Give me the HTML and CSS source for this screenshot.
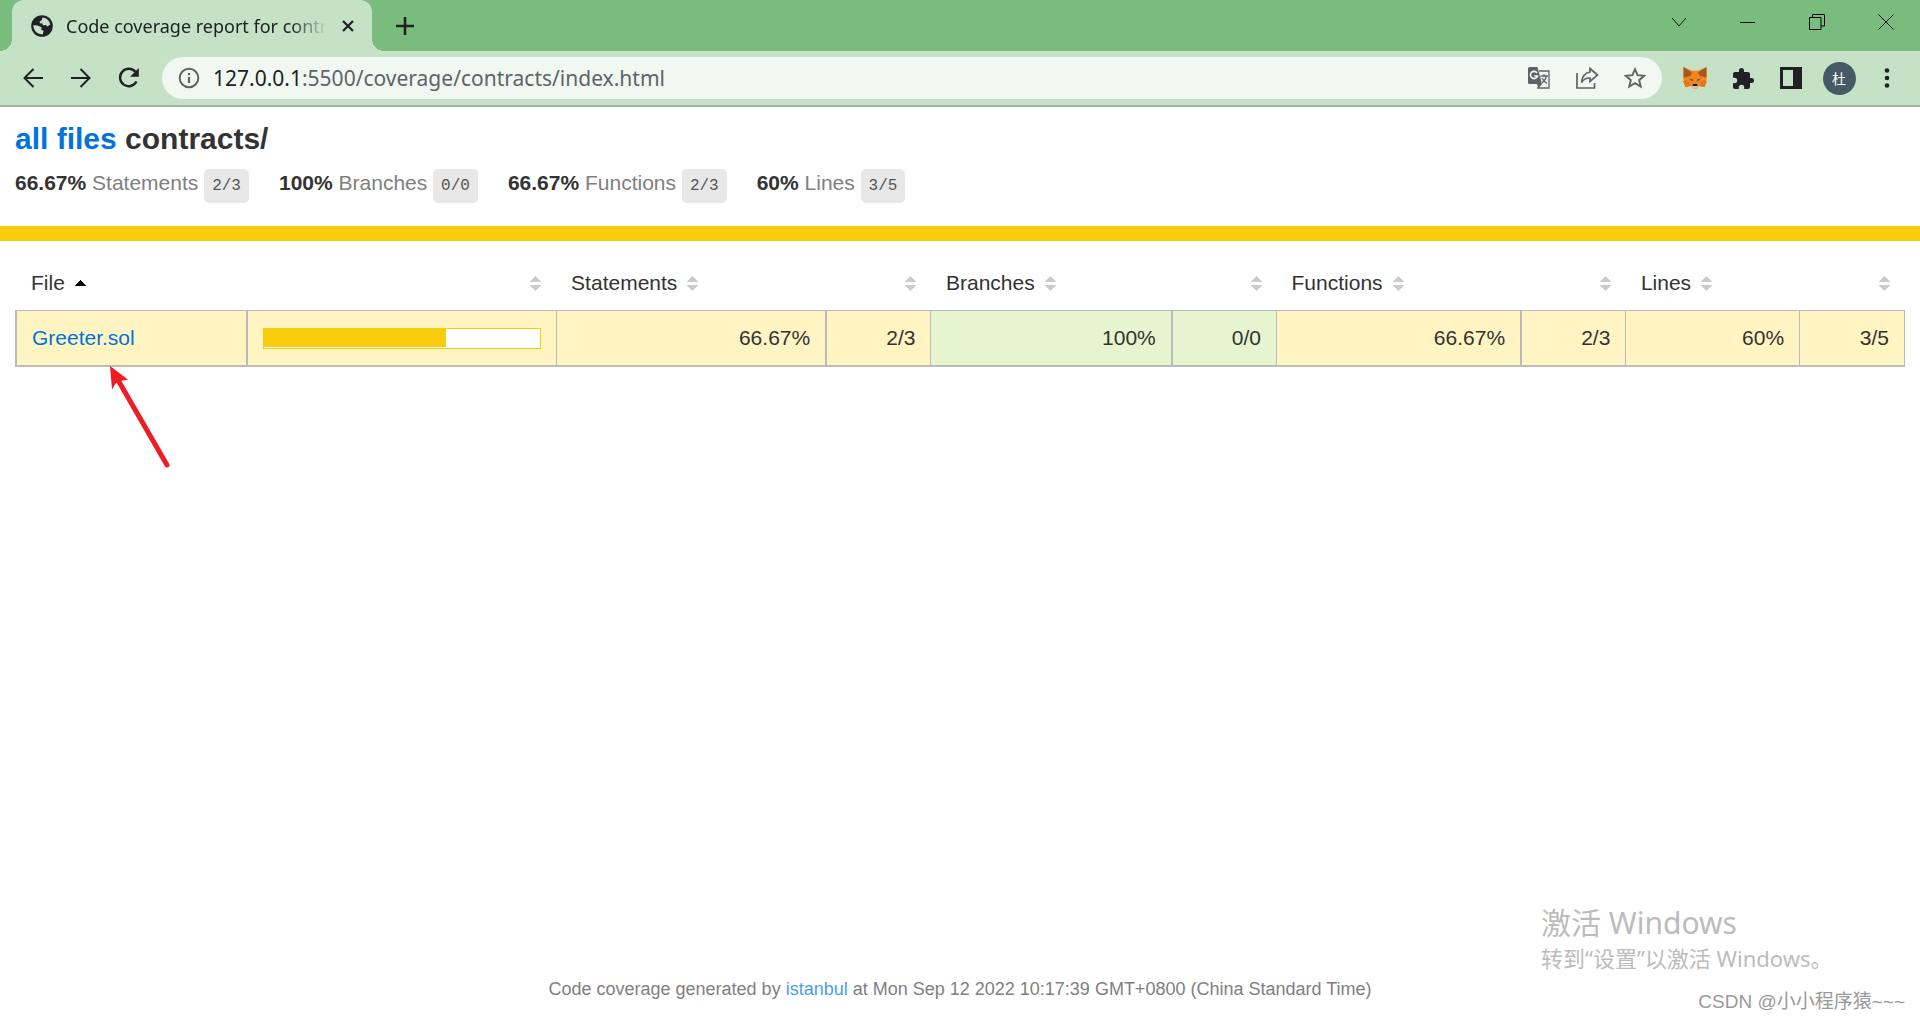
FILE: index.html
```html
<!DOCTYPE html>
<html lang="en">
<head>
<meta charset="utf-8">
<title>Code coverage report for contracts/</title>
<link rel="stylesheet" href="styles.css">
</head>
<body>
<div class="window">
  <header class="chrome">
    <div class="tabstrip">
      <div class="tab">
        <svg class="favicon" viewBox="0 0 22 22" width="22" height="22"><circle cx="11" cy="11" r="10.8" fill="#202124"/><path d="M11.5 2.6c3.600 0 7 3 7.700 6.800l-2.700 2.200-1.700-1.500-3 .2-.4-1.800-2.500-.2-.3-2 2-.8z M2.300 10.300l4.200.2 4 1.700-.3 2.500 2.300 1-.6 3.500c-5 .8-9.600-3.300-9.600-8.900z" fill="#c5e2c6"/></svg>
        <span class="tab-title">Code coverage report for contracts/</span>
        <button class="tab-close" aria-label="Close tab"><svg viewBox="0 0 12 12" width="12" height="12"><path d="M1 1l10 10M11 1L1 11" stroke="#202124" stroke-width="2.200"/></svg></button>
      </div>
      <button class="new-tab" aria-label="New tab"><svg viewBox="0 0 18 18" width="18" height="18"><path d="M9 0v18M0 9h18" stroke="#202124" stroke-width="2.600"/></svg></button>
      <div class="controls">
        <button aria-label="Search tabs"><svg viewBox="0 0 16 16" width="16" height="16"><path d="M1 4l7 8 7-8" fill="none" stroke="#111"/></svg></button>
        <button aria-label="Minimize"><svg viewBox="0 0 16 16" width="16" height="16"><path d="M0 8.500h15" stroke="#000"/></svg></button>
        <button aria-label="Restore"><svg viewBox="0 0 16 16" width="16" height="16"><path d="M.5 3.500h11.500v12H.5zM3.500 3.500v-3h12v11.500H12" fill="none" stroke="#000"/></svg></button>
        <button aria-label="Close"><svg viewBox="0 0 16 16" width="16" height="16"><path d="M.5 .5l15 15M15.500 .5l-15 15" stroke="#000"/></svg></button>
      </div>
    </div>
    <div class="toolbar">
      <div class="tools">
        <button aria-label="Back"><svg viewBox="0 0 20 20" width="20" height="20"><path d="M20 10H2M10.500 1L1.500 10l9 9" fill="none" stroke="#202124" stroke-width="2"/></svg></button>
        <button aria-label="Forward"><svg viewBox="0 0 20 20" width="20" height="20"><path d="M0 10h18M9.500 1l9 9-9 9" fill="none" stroke="#202124" stroke-width="2"/></svg></button>
        <button aria-label="Reload"><svg viewBox="0 0 22 22" width="22" height="22"><path d="M18.500 14.500A8.700 8.700 0 1 1 17.500 5" fill="none" stroke="#202124" stroke-width="2.400"/><path d="M20.800 1v8.700h-8.700z" fill="#202124"/></svg></button>
      </div>
      <div class="omnibox">
        <button aria-label="Site information"><svg viewBox="0 0 22 22" width="22" height="22"><circle cx="11" cy="11" r="9.300" fill="none" stroke="#5f6368" stroke-width="2"/><path d="M11 10v6M11 6v2.200" stroke="#5f6368" stroke-width="2.200"/></svg></button>
        <div class="url"><span class="host">127.0.0.1</span>:5500/coverage/contracts/index.html</div>
        <button aria-label="Translate"><svg viewBox="0 0 22 22" width="22" height="22"><path d="M11 4h10v17H9" fill="none" stroke="#5f6368" stroke-width="1.300"/><path d="M1.500 0h8l4.500 17H1.500Q0 17 0 15.500v-14Q0 0 1.500 0zM9 17h5l-3.500 4.500z" fill="#5f6368"/><path d="M9 5.900A3.600 3.600 0 1 0 9.500 9H6.300" fill="none" stroke="#f0f8f1" stroke-width="1.700"/><path d="M12.500 9h7.500M16 7v2M18.500 9c-.7 3.500-2.500 5.500-4.500 7M14 11c1 2.500 3 4.200 5 5.500" fill="none" stroke="#5f6368" stroke-width="1.300"/></svg></button>
        <button aria-label="Share"><svg viewBox="0 0 24 24" width="24" height="24"><path d="M2 7v15h17.500v-5" fill="none" stroke="#5f6368" stroke-width="1.700"/><path d="M15 2.500l7.500 6.500-7.500 6.500V12C11 12 8.500 13 6.500 16.500 7 11 9.500 7 15 6z" fill="none" stroke="#5f6368" stroke-width="1.700"/></svg></button>
        <button aria-label="Bookmark"><svg viewBox="0 0 22 22" width="22" height="22"><path d="M11 2.200l2.600 6 6.600.6-5 4.400 1.500 6.400L11 16.200l-5.700 3.400 1.500-6.400-5-4.400 6.600-.6z" fill="none" stroke="#5f6368" stroke-width="1.900"/></svg></button>
      </div>
      <div class="tools">
        <button aria-label="MetaMask"><svg viewBox="0 0 24 22" width="24" height="22"><path d="M.5 0L9 3.800h6L23.500 0 24 9l-1 6-1.500 5-5.500-1-2 2.500h-4L8 19l-5.500 1L1 15 0 9z" fill="#f6851b"/><path d="M.5 0L9 5.500 7.500 9 .8 10.500zM23.500 0L15 5.500 16.500 9l6.700 1.500z" fill="#a85722"/><path d="M0 14l5-.5L8 19l-5.500 1zM24 14l-5-.5L16 19l5.500 1z" fill="#e4761b"/><path d="M8 18.500l2 2.500h4l2-2.500-2-1h-4z" fill="#d7c1b3"/><path d="M9.800 17h4.400l.3 2h-5z" fill="#161616"/><path d="M6 11.500l4 1-.6 2zM18 11.500l-4 1 .6 2z" fill="#5c4a3d"/></svg></button>
        <button aria-label="Extensions"><svg viewBox="1 0 22 22" width="22" height="22"><path d="M20.500 11H19V7c0-1.100-.9-2-2-2h-4V3.500a2.500 2.500 0 0 0-5 0V5H4c-1.100 0-2 .9-2 2v3.800h1.500a2.700 2.700 0 0 1 0 5.400H2V20c0 1.100.9 2 2 2h3.800v-1.500a2.700 2.700 0 0 1 5.400 0V22H17c1.100 0 2-.9 2-2v-4h1.500a2.500 2.500 0 0 0 0-5z" fill="#202124"/></svg></button>
        <button aria-label="Side panel"><svg viewBox="0 0 22 22" width="22" height="22"><path d="M0 0h22v22H0zM3 3v16h10V3z" fill="#202124" fill-rule="evenodd"/></svg></button>
        <button aria-label="Profile"><span class="avatar">杜</span></button>
        <button aria-label="Menu"><svg viewBox="0 0 6 20" width="6" height="20"><g fill="#202124"><circle cx="3" cy="2.500" r="2.300"/><circle cx="3" cy="10" r="2.300"/><circle cx="3" cy="17.500" r="2.300"/></g></svg></button>
      </div>
    </div>
  </header>

  <main class="report">
    <div class="summary">
      <h1><a href="#">all files</a> contracts/</h1>
      <div class="stats">
        <div><strong>66.67%</strong> <span class="quiet">Statements</span> <code>2/3</code></div>
        <div><strong>100%</strong> <span class="quiet">Branches</span> <code>0/0</code></div>
        <div><strong>66.67%</strong> <span class="quiet">Functions</span> <code>2/3</code></div>
        <div><strong>60%</strong> <span class="quiet">Lines</span> <code>3/5</code></div>
      </div>
    </div>
    <div class="status-line"></div>
    <div class="table-area">
      <table class="coverage">
        <thead>
          <tr>
            <th class="w-file"><button>File<i class="sorter sorted"></i></button></th>
            <th class="w-pic end"><button aria-label="Sort by coverage"><i class="sorter"></i></button></th>
            <th class="w-stmt"><button>Statements<i class="sorter"></i></button></th>
            <th class="w-raw end"><button aria-label="Sort by statement count"><i class="sorter"></i></button></th>
            <th class="w-branch"><button>Branches<i class="sorter"></i></button></th>
            <th class="w-raw end"><button aria-label="Sort by branch count"><i class="sorter"></i></button></th>
            <th class="w-func"><button>Functions<i class="sorter"></i></button></th>
            <th class="w-raw end"><button aria-label="Sort by function count"><i class="sorter"></i></button></th>
            <th class="w-line"><button>Lines<i class="sorter"></i></button></th>
            <th class="w-raw end"><button aria-label="Sort by line count"><i class="sorter"></i></button></th>
          </tr>
        </thead>
        <tbody>
          <tr>
            <td class="file"><a href="#">Greeter.sol</a></td>
            <td><div class="chart"><div class="fill" style="width: 66%"></div></div></td>
            <td class="num pct">66.67%</td>
            <td class="num">2/3</td>
            <td class="num pct high">100%</td>
            <td class="num high">0/0</td>
            <td class="num pct">66.67%</td>
            <td class="num">2/3</td>
            <td class="num">60%</td>
            <td class="num">3/5</td>
          </tr>
        </tbody>
      </table>
      <svg class="arrow" viewBox="0 0 70 110" width="70" height="110"><path d="M8 14L57 99" stroke="#ee1c25" stroke-width="5" stroke-linecap="round"/><path d="M0 0l18 13.500-7.500 1.500-5 2.500-3.500 6z" fill="#ee1c25"/></svg>
    </div>
    <footer>Code coverage generated by <a href="#">istanbul</a> at Mon Sep 12 2022 10:17:39 GMT+0800 (China Standard Time)</footer>
  </main>

  <div class="activation">
    <div class="activation-title">激活 Windows</div>
    <div class="activation-text">转到“设置”以激活 Windows。</div>
  </div>
  <div class="credit">CSDN @小小程序猿~~~</div>
</div>
</body>
</html>
```

FILE: styles.css
```css
* { box-sizing: border-box; }
body {
  margin: 0;
  background: #fff;
  color: #333;
  font: 21px/24px "Liberation Sans", Arial, "Noto Sans CJK SC", sans-serif;
}
a { color: #0074d9; text-decoration: none; }
button {
  padding: 0;
  border: 0;
  background: none;
  color: inherit;
  font: inherit;
}
svg { display: block; }

.window {
  position: relative;
  display: flex;
  flex-direction: column;
  min-height: 100vh;
}

/* Browser frame */
.chrome {
  background: #c5e2c6;
  border-bottom: 2px solid #9eb5a0;
  font-family: "Noto Sans", "Noto Sans CJK SC", sans-serif;
}
.tabstrip {
  display: flex;
  height: 51px;
  padding-left: 12px;
  background: #7abc7d;
}
.tab {
  position: relative;
  display: flex;
  align-items: center;
  width: 360px;
  padding: 0 15px 0 19px;
  background: #c5e2c6;
  border-radius: 12px 12px 0 0;
}
.tab::before, .tab::after {
  content: "";
  position: absolute;
  bottom: 0;
  width: 12px;
  height: 12px;
}
.tab::before {
  right: 100%;
  background: radial-gradient(circle at 0 0, #7abc7d 12px, #c5e2c6 12px);
}
.tab::after {
  left: 100%;
  background: radial-gradient(circle at 100% 0, #7abc7d 12px, #c5e2c6 12px);
}
.tab-title {
  flex: 1;
  min-width: 0;
  margin: 0 12px 0 13px;
  overflow: hidden;
  white-space: nowrap;
  color: #202124;
  font-size: 18px;
  -webkit-mask-image: linear-gradient(90deg, #000 86%, transparent);
  mask-image: linear-gradient(90deg, #000 86%, transparent);
}
.tab-close, .new-tab, .controls button, .tools button, .omnibox button {
  display: flex;
  align-items: center;
  justify-content: center;
}
.tab-close { width: 18px; height: 24px; }
.new-tab { width: 66px; }
.controls { display: flex; margin-left: auto; height: 43px; }
.controls button { width: 69px; }
.toolbar {
  display: flex;
  align-items: center;
  gap: 9px;
  height: 54px;
  padding: 0 9px;
}
.tools { display: flex; }
.tools button, .omnibox button { width: 48px; height: 42px; }
.omnibox {
  flex: 1;
  display: flex;
  align-items: center;
  height: 42px;
  padding: 0 3px;
  background: #f0f8f1;
  border-radius: 21px;
}
.url { flex: 1; color: #5f6368; font-size: 21px; }
.host { color: #202124; }
.avatar {
  width: 33px;
  height: 33px;
  border-radius: 50%;
  background: #455a64;
  color: #fff;
  font-size: 14px;
  line-height: 33px;
}

/* Coverage report */
.report { flex: 1; display: flex; flex-direction: column; }
.summary { padding: 14px 15px 23px; }
h1 { margin: 0; font-size: 30px; line-height: 36px; }
.stats {
  display: flex;
  flex-wrap: wrap;
  gap: 30px;
  margin-top: 9px;
  line-height: 34px;
}
.quiet { color: #808080; }
code {
  display: inline-block;
  padding: 1px 8px 0;
  border-radius: 5px;
  background: #e8e8e8;
  color: #555;
  font: 16px/33px "Liberation Mono", monospace;
}
.status-line { height: 15px; background: #f9cd0b; }
.table-area { position: relative; flex: 1; padding: 15px; }
.coverage {
  width: 100%;
  border-collapse: collapse;
  table-layout: fixed;
}
.coverage th { padding: 15px; font-weight: normal; text-align: left; white-space: nowrap; }
.coverage th.end { text-align: right; }
.w-file { width: 12.250%; }
.w-pic { width: 16.350%; }
.w-stmt { width: 14.300%; }
.w-branch { width: 12.750%; }
.w-func { width: 12.950%; }
.w-line { width: 9.200%; }
.w-raw { width: 5.550%; }
.sorter {
  display: inline-block;
  width: 11px;
  height: 15px;
  margin-left: 10px;
  vertical-align: -1px;
  background:
    conic-gradient(from 135deg at 50% 0, #ccc 90deg, transparent 0) 0 0 / 11px 6px no-repeat,
    conic-gradient(from -45deg at 50% 100%, #ccc 90deg, transparent 0) 0 100% / 11px 6px no-repeat;
}
.sorter.sorted {
  background: conic-gradient(from 135deg at 50% 0, #000 90deg, transparent 0) 0 4px / 11px 6px no-repeat;
}
.coverage td {
  padding: 15px;
  border: 1px solid #bbb;
  border-bottom-width: 2px;
  background: #fff4c2;
}
.coverage td.high { background: #e6f5d0; }
.coverage td.file { border-left-width: 2px; border-right-width: 2px; }
.coverage td.pct { border-right-width: 2px; }
.num { text-align: right; }
.chart {
  height: 21px;
  border: 1px solid #f9cd0b;
  background: #fff;
}
.fill { height: 18px; background: #f9cd0b; }
.arrow { position: absolute; left: 110px; top: 125px; }
footer {
  padding: 0 15px 19px;
  color: #808080;
  font-size: 18px;
  text-align: center;
}
footer a { color: #4a9fe4; }

/* Desktop overlays */
.activation {
  position: absolute;
  right: 90px;
  bottom: 47px;
  width: 289px;
  color: #bcbcbc;
  font-family: "Noto Sans", "Noto Sans CJK SC", sans-serif;
  white-space: nowrap;
}
.activation-title { font-size: 30px; line-height: 40px; }
.activation-text { font-size: 22px; line-height: 30px; }
.credit {
  position: absolute;
  right: 15px;
  bottom: 6px;
  color: #999;
  font-size: 19px;
  text-shadow: 1px 1px 0 #fff;
}
```
